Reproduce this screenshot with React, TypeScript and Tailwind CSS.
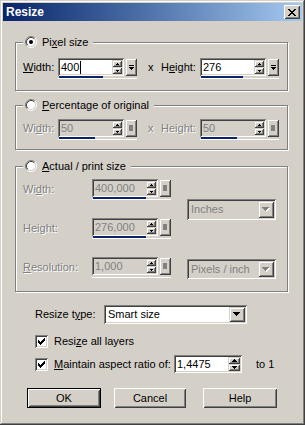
import React from "react";

const sunken =
  "shadow-[inset_1px_1px_#808080,inset_-1px_-1px_#ffffff,inset_2px_2px_#404040,inset_-2px_-2px_#d4d0c8]";
const raised =
  "shadow-[inset_1px_1px_#d4d0c8,inset_-1px_-1px_#404040,inset_2px_2px_#ffffff,inset_-2px_-2px_#808080]";
const btnRaised =
  "shadow-[inset_1px_1px_#ffffff,inset_-1px_-1px_#404040,inset_2px_2px_#d4d0c8,inset_-2px_-2px_#808080]";
const dis = "text-[#808080] [text-shadow:1px_1px_0_#ffffff]";

function U({ children }: { children: React.ReactNode }) {
  return <span className="underline underline-offset-[1px]">{children}</span>;
}

function SpinArrow({ up, small }: { up: boolean; small?: boolean }) {
  if (small) {
    return (
      <svg width="3" height="2" viewBox="0 0 3 2" className="block">
        <path fill="#000" d={up ? "M1 0h1v1H1z M0 1h3v1H0z" : "M0 0h3v1H0z M1 1h1v1H1z"} />
      </svg>
    );
  }
  return (
    <svg width="5" height="3" viewBox="0 0 5 3" className="block">
      <path
        fill="#000"
        d={up ? "M2 0h1v1H2z M1 1h3v1H1z M0 2h5v1H0z" : "M0 0h5v1H0z M1 1h3v1H1z M2 2h1v1H2z"}
      />
    </svg>
  );
}

function SpinButtons({ w, small }: { w: string; small?: boolean }) {
  return (
    <div className={`flex flex-col ${w} h-[14px]`}>
      <div className={`h-[7px] bg-[#d4d0c8] ${raised} flex items-center justify-center`}>
        <SpinArrow up small={small} />
      </div>
      <div className={`h-[7px] bg-[#d4d0c8] ${raised} flex items-center justify-center`}>
        <SpinArrow up={false} small={small} />
      </div>
    </div>
  );
}

function SpinField({
  value,
  disabled,
  cursor,
  bar,
}: {
  value: string;
  disabled?: boolean;
  cursor?: boolean;
  bar: string;
}) {
  return (
    <div className="flex flex-col w-[79px]">
      <div className="flex gap-[1px]">
        <div
          className={`${sunken} ${disabled ? "bg-[#d4d0c8]" : "bg-white"} flex h-[18px] w-[66px] p-[2px]`}
        >
          <div className={`flex-1 flex items-center pl-[1px] ${disabled ? "text-[#808080]" : "text-black"}`}>
            <span>{value}</span>
            {cursor && <span className="ml-[1px] w-[1px] h-[13px] bg-black" />}
          </div>
          <SpinButtons w="w-[10px]" small />
        </div>
        <div className={`w-[12px] h-[18px] bg-[#d4d0c8] ${raised} flex items-center justify-center`}>
          {disabled ? (
            <div className="w-[4px] h-[6px] bg-[#808080]" />
          ) : (
            <svg width="5" height="5" viewBox="0 0 5 5" className="block">
              <path fill="#000" d="M0 0h5v1H0z M0 2h5v1H0z M1 3h3v1H1z M2 4h1v1H2z" />
            </svg>
          )}
        </div>
      </div>
      <div className="h-[2px] w-full flex">
        <div className={`h-[2px] ml-[1px] bg-[#0a246a] ${bar}`} />
      </div>
      <div className="h-[1px] w-full bg-white" />
    </div>
  );
}

function Triangle({ disabled }: { disabled?: boolean }) {
  const d = "M0 0h7v1H0z M1 1h5v1H1z M2 2h3v1H2z M3 3h1v1H3z";
  return (
    <svg width="8" height="5" viewBox="0 0 8 5" className="block">
      {disabled && <path fill="#ffffff" d={d} transform="translate(1 1)" />}
      <path fill={disabled ? "#808080" : "#000"} d={d} />
    </svg>
  );
}

function Combo({
  text,
  disabled,
  cls,
}: {
  text: string;
  disabled?: boolean;
  cls: string;
}) {
  return (
    <div className={`${sunken} ${disabled ? "bg-[#d4d0c8]" : "bg-white"} flex p-[2px] ${cls}`}>
      <div className={`flex-1 flex items-center pl-[2px] ${disabled ? "text-[#808080]" : "text-black"}`}>
        {text}
      </div>
      <div className={`w-[16px] h-full bg-[#d4d0c8] ${raised} flex items-center justify-center`}>
        <Triangle disabled={disabled} />
      </div>
    </div>
  );
}

function Radio({ checked }: { checked?: boolean }) {
  return (
    <svg width="12" height="12" viewBox="0 0 12 12" className="block">
      <circle cx="6" cy="6" r="4.5" fill="#ffffff" />
      <path d="M2.11 9.89 A5.5 5.5 0 0 1 9.89 2.11" stroke="#808080" fill="none" />
      <path d="M9.89 2.11 A5.5 5.5 0 0 1 2.11 9.89" stroke="#ffffff" fill="none" />
      <path d="M2.82 9.18 A4.5 4.5 0 0 1 9.18 2.82" stroke="#404040" fill="none" />
      <path d="M9.18 2.82 A4.5 4.5 0 0 1 2.82 9.18" stroke="#d4d0c8" fill="none" />
      {checked && <circle cx="6" cy="6" r="2" fill="#000" />}
    </svg>
  );
}

function Check() {
  return (
    <div className={`w-[13px] h-[13px] bg-white ${sunken} flex items-center justify-center`}>
      <svg width="7" height="7" viewBox="0 0 7 7" className="block">
        <path
          fill="#000"
          d="M0 2h1v3H0z M1 3h1v3H1z M2 4h1v3H2z M3 3h1v3H3z M4 2h1v3H4z M5 1h1v3H5z M6 0h1v3H6z"
        />
      </svg>
    </div>
  );
}

function Group({
  legend,
  checked,
  cls,
  children,
}: {
  legend: React.ReactNode;
  checked?: boolean;
  cls: string;
  children: React.ReactNode;
}) {
  return (
    <div
      className={`relative w-[273px] border border-[#808080] shadow-[1px_1px_0_#ffffff,inset_1px_1px_0_#ffffff] ${cls}`}
    >
      <div className="absolute left-[7px] top-[-8px] h-[14px] flex items-center bg-[#d4d0c8] pl-[2px] pr-[5px]">
        <Radio checked={checked} />
        <span className="ml-[5px] text-black">{legend}</span>
      </div>
      {children}
    </div>
  );
}

function Button({ children, def, w }: { children: React.ReactNode; def?: boolean; w: string }) {
  return (
    <div className={`${w} h-[20px] ${def ? "border border-black" : ""}`}>
      <div className={`w-full h-full bg-[#d4d0c8] ${btnRaised} flex items-center justify-center text-black`}>
        {children}
      </div>
    </div>
  );
}

export default function App() {
  return (
    <div className="w-[305px] h-[425px] bg-[#d4d0c8] p-[3px] shadow-[inset_-1px_-1px_#404040,inset_1px_1px_#d4d0c8,inset_-2px_-2px_#808080,inset_2px_2px_#ffffff] font-['Liberation_Sans',Arial,sans-serif] text-[11px] leading-[13px] text-black select-none">
      {/* title bar */}
      <div className="h-[18px] flex items-center justify-between bg-linear-to-r from-[#0a246a] to-[#a6caf0] pl-[3px] pr-[2px]">
        <span className="text-white font-bold text-[12px]">Resize</span>
        <div className={`w-[16px] h-[14px] bg-[#d4d0c8] ${btnRaised} flex items-center justify-center`}>
          <svg width="8" height="7" viewBox="0 0 8 7" className="block">
            <path
              fill="#000"
              d="M0 0h2v1H0z M6 0h2v1H6z M1 1h2v1H1z M5 1h2v1H5z M2 2h4v1H2z M3 3h2v1H3z M2 4h4v1H2z M1 5h2v1H1z M5 5h2v1H5z M0 6h2v1H0z M6 6h2v1H6z"
            />
          </svg>
        </div>
      </div>

      <div className="flex flex-col pl-[12px] pt-[21px]">
        {/* Pixel size */}
        <Group
          checked
          cls="h-[49px] pt-[15px] pl-[7px]"
          legend={
            <>
              Pi<U>x</U>el size
            </>
          }
        >
          <div className="flex items-start">
            <span className="w-[35px] h-[18px] flex items-center">
              <U>W</U>idth:
            </span>
            <SpinField value="400" cursor bar="w-[44px]" />
            <span className="w-[24px] h-[18px] flex items-center pl-[11px]">x</span>
            <span className="w-[39px] h-[18px] flex items-center">
              H<U>e</U>ight:
            </span>
            <SpinField value="276" bar="w-[42px]" />
          </div>
        </Group>

        {/* Percentage */}
        <Group
          cls="mt-[14px] h-[45px] pt-[13px] pl-[7px]"
          legend={
            <>
              <U>P</U>ercentage of original
            </>
          }
        >
          <div className="flex items-start">
            <span className={`w-[35px] h-[18px] flex items-center ${dis}`}>
              Wi<U>d</U>th:
            </span>
            <SpinField value="50" disabled bar="w-[36px]" />
            <span className={`w-[24px] h-[18px] flex items-center pl-[11px] ${dis}`}>x</span>
            <span className={`w-[39px] h-[18px] flex items-center ${dis}`}>
              Hei<U>g</U>ht:
            </span>
            <SpinField value="50" disabled bar="w-[36px]" />
          </div>
        </Group>

        {/* Actual / print size */}
        <Group
          cls="mt-[16px] h-[126px] pt-[12px] pl-[7px]"
          legend={
            <>
              <U>A</U>ctual / print size
            </>
          }
        >
          <div className="flex items-start">
            <div className="flex flex-col gap-[18px]">
              <div className="flex">
                <span className={`w-[69px] h-[21px] flex items-center ${dis}`}>
                  Wi<U>d</U>th:
                </span>
                <SpinField value="400,000" disabled bar="w-[53px]" />
              </div>
              <div className="flex">
                <span className={`w-[69px] h-[21px] flex items-center ${dis}`}>
                  Hei<U>g</U>ht:
                </span>
                <SpinField value="276,000" disabled bar="w-[53px]" />
              </div>
              <div className="flex">
                <span className={`w-[69px] h-[21px] flex items-center ${dis}`}>
                  <U>R</U>esolution:
                </span>
                <SpinField value="1,000" disabled bar="w-0" />
              </div>
            </div>
            <div className="flex flex-col ml-[16px]">
              <Combo text="Inches" disabled cls="mt-[20px] w-[89px] h-[21px]" />
              <Combo text="Pixels / inch" disabled cls="mt-[39px] w-[89px] h-[20px]" />
            </div>
          </div>
        </Group>

        {/* Resize type */}
        <div className="mt-[13px] pl-[20px] flex items-center h-[19px]">
          <span className="w-[69px]">
            Resize t<U>y</U>pe:
          </span>
          <Combo text="Smart size" cls="w-[143px] h-[19px]" />
        </div>

        <div className="mt-[8px] pl-[20px] flex items-center h-[18px]">
          <Check />
          <span className="ml-[6px]">
            Resi<U>z</U>e all layers
          </span>
        </div>

        <div className="mt-[5px] pl-[20px] flex items-center h-[18px]">
          <Check />
          <span className="ml-[6px] w-[120px]">
            <U>M</U>aintain aspect ratio of:
          </span>
          <div className={`${sunken} bg-white flex h-[18px] w-[68px] p-[2px]`}>
            <div className="flex-1 flex items-center pl-[1px]">1,4475</div>
            <SpinButtons w="w-[12px]" />
          </div>
          <span className="ml-[14px]">to 1</span>
        </div>

        <div className="mt-[15px] pl-[12px] flex">
          <Button def w="w-[74px]">
            OK
          </Button>
          <div className="ml-[13px]">
            <Button w="w-[72px]">Cancel</Button>
          </div>
          <div className="ml-[17px]">
            <Button w="w-[74px]">Help</Button>
          </div>
        </div>
      </div>
    </div>
  );
}
